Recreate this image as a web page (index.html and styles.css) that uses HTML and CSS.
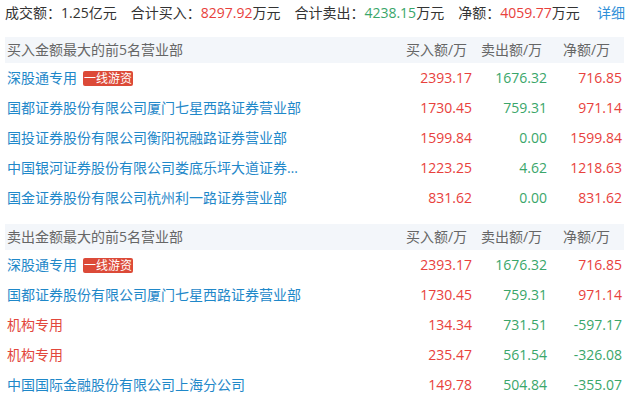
FILE: index.html
```html
<!DOCTYPE html>
<html lang="zh">
<head>
<meta charset="utf-8">
<link rel="stylesheet" href="styles.css">
</head>
<body>
<div class="wrap">
  <div class="summary">
    <span class="item">成交额：1.25亿元</span>
    <span class="item">合计买入：<span class="up">8297.92</span>万元</span>
    <span class="item">合计卖出：<span class="down">4238.15</span>万元</span>
    <span class="item">净额：<span class="up">4059.77</span>万元</span>
    <a class="more">详细</a>
  </div>

  <div class="section">
    <div class="row head">
      <div class="name">买入金额最大的前5名营业部</div>
      <div class="num">买入额/万</div>
      <div class="num">卖出额/万</div>
      <div class="num">净额/万</div>
    </div>
    <div class="row">
      <div class="name"><span class="link">深股通专用</span><span class="tag">一线游资</span></div>
      <div class="num up">2393.17</div><div class="num down">1676.32</div><div class="num up">716.85</div>
    </div>
    <div class="row">
      <div class="name"><span class="link">国都证券股份有限公司厦门七星西路证券营业部</span></div>
      <div class="num up">1730.45</div><div class="num down">759.31</div><div class="num up">971.14</div>
    </div>
    <div class="row">
      <div class="name"><span class="link">国投证券股份有限公司衡阳祝融路证券营业部</span></div>
      <div class="num up">1599.84</div><div class="num down">0.00</div><div class="num up">1599.84</div>
    </div>
    <div class="row">
      <div class="name"><span class="link">中国银河证券股份有限公司娄底乐坪大道证券营业部</span></div>
      <div class="num up">1223.25</div><div class="num down">4.62</div><div class="num up">1218.63</div>
    </div>
    <div class="row">
      <div class="name"><span class="link">国金证券股份有限公司杭州利一路证券营业部</span></div>
      <div class="num up">831.62</div><div class="num down">0.00</div><div class="num up">831.62</div>
    </div>
  </div>

  <div class="section">
    <div class="row head">
      <div class="name">卖出金额最大的前5名营业部</div>
      <div class="num">买入额/万</div>
      <div class="num">卖出额/万</div>
      <div class="num">净额/万</div>
    </div>
    <div class="row">
      <div class="name"><span class="link">深股通专用</span><span class="tag">一线游资</span></div>
      <div class="num up">2393.17</div><div class="num down">1676.32</div><div class="num up">716.85</div>
    </div>
    <div class="row">
      <div class="name"><span class="link">国都证券股份有限公司厦门七星西路证券营业部</span></div>
      <div class="num up">1730.45</div><div class="num down">759.31</div><div class="num up">971.14</div>
    </div>
    <div class="row">
      <div class="name"><span class="link inst">机构专用</span></div>
      <div class="num up">134.34</div><div class="num down">731.51</div><div class="num down">-597.17</div>
    </div>
    <div class="row">
      <div class="name"><span class="link inst">机构专用</span></div>
      <div class="num up">235.47</div><div class="num down">561.54</div><div class="num down">-326.08</div>
    </div>
    <div class="row">
      <div class="name"><span class="link">中国国际金融股份有限公司上海分公司</span></div>
      <div class="num up">149.78</div><div class="num down">504.84</div><div class="num down">-355.07</div>
    </div>
  </div>
</div>
</body>
</html>
```

FILE: styles.css
```css
* { box-sizing: border-box; }
html, body { margin: 0; padding: 0; background: #fff; }
body {
  font-family: "Open Sans", "Noto Sans CJK SC", sans-serif;
  font-size: 14px;
  color: #333;
  overflow: hidden;
}
.wrap { padding: 0 5px; width: 629px; }
.summary {
  display: flex;
  height: 25px;
  line-height: 25px;
  margin-bottom: 12px;
  white-space: nowrap;
}
.summary .item { margin-right: 14px; }
.more { margin-left: auto; margin-right: -1px; color: #2f8fd8; }
.up { color: #e8413c; }
.down { color: #3aa66a; }
.section { margin-bottom: 11px; }
.row {
  display: grid;
  grid-template-columns: 394px 75px 75px 75px;
  height: 30px;
  line-height: 30px;
}
.row.head {
  height: 26px;
  line-height: 26px;
  background: #f3f6fa;
  color: #666;
}
.row.head .num { text-align: center; padding-right: 0; }
.name {
  padding-left: 2px;
  display: flex;
  align-items: center;
  white-space: nowrap;
}
.link {
  color: #1f88c9;
  max-width: 298px;
  overflow: hidden;
  text-overflow: ellipsis;
  white-space: nowrap;
}
.link.inst { color: #e2473c; }
.tag {
  display: inline-block;
  margin-left: 6px;
  height: 15px;
  line-height: 15px;
  padding: 0 1px;
  font-size: 12px;
  color: #fff;
  background: #dc4a38;
  border-radius: 2px;
}
.num {
  text-align: right;
  padding-right: 2px;
}
```
